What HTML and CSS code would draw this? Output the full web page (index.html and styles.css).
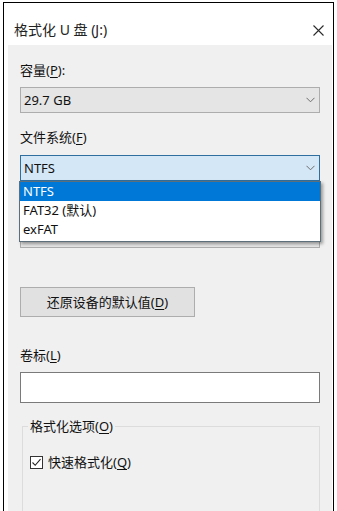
FILE: index.html
```html
<!DOCTYPE html>
<html lang="zh-CN">
<head>
<meta charset="utf-8">
<title>格式化 U 盘 (J:)</title>
<link rel="stylesheet" href="styles.css">
</head>
<body>
<div class="window">
  <div class="titlebar">
    <span class="title">格式化 U 盘 (J:)</span>
    <svg class="close" width="11" height="11" viewBox="0 0 11 11"><path d="M0.5 0.5 L10.5 10.5 M10.5 0.5 L0.5 10.5" stroke="#2b2b2b" stroke-width="1.1" fill="none"/></svg>
  </div>
  <div class="content">
    <div class="label first">容量(<u>P</u>):</div>
    <div class="select">
      <span>29.7 GB</span>
      <svg class="chev" width="9" height="6" viewBox="0 0 9 6"><polyline points="0.5,0.8 4.5,4.8 8.5,0.8" stroke="#6d6d6d" stroke-width="1" fill="none"/></svg>
    </div>
    <div class="label gap2">文件系统(<u>F</u>)</div>
    <div class="combo">
      <div class="select focused">
        <span>NTFS</span>
        <svg class="chev" width="9" height="6" viewBox="0 0 9 6"><polyline points="0.5,0.8 4.5,4.8 8.5,0.8" stroke="#6d6d6d" stroke-width="1" fill="none"/></svg>
      </div>
      <ul class="dropdown">
        <li class="sel">NTFS</li>
        <li>FAT32 (默认)</li>
        <li>exFAT</li>
      </ul>
    </div>
    <div class="label gap3 covered">分配单元大小(<u>A</u>)</div>
    <div class="select unit">
      <span class="covered">32 千字节 (默认)</span>
      <svg class="chev" width="9" height="6" viewBox="0 0 9 6"><polyline points="0.5,0.8 4.5,4.8 8.5,0.8" stroke="#6d6d6d" stroke-width="1" fill="none"/></svg>
    </div>
    <div class="button">还原设备的默认值(<u>D</u>)</div>
    <div class="label gap4">卷标(<u>L</u>)</div>
    <div class="input"></div>
    <fieldset class="group">
      <legend>格式化选项(<u>O</u>)</legend>
      <div class="check-row">
        <svg class="checkbox" width="13" height="13" viewBox="0 0 13 13"><rect x="0.5" y="0.5" width="12" height="12" fill="#fff" stroke="#333" stroke-width="1"/><polyline points="2.5,6.5 5.2,9.3 10.5,3.2" stroke="#222" stroke-width="1.1" fill="none"/></svg>
        <span>快速格式化(<u>Q</u>)</span>
      </div>
    </fieldset>
  </div>
</div>
</body>
</html>
```

FILE: styles.css
```css
html, body {
  margin: 0;
  padding: 0;
  background: #fff;
  overflow: hidden;
}
body {
  font-family: "Noto Sans", "Noto Sans CJK SC", sans-serif;
  font-size: 13px;
  color: #111;
}
u {
  text-decoration: underline;
  text-underline-offset: 2px;
  text-decoration-thickness: 1px;
}
.covered {
  visibility: hidden;
}
.window {
  margin: 2px 0 0 3px;
  width: 331px;
  height: 520px;
  border: 1px solid #000;
  border-bottom: 0;
  box-sizing: border-box;
  background: #fff;
  display: flex;
  flex-direction: column;
  overflow: hidden;
}
.titlebar {
  height: 42px;
  flex: none;
  box-sizing: border-box;
  padding: 12px 9px 0 10px;
  display: flex;
  align-items: center;
  justify-content: space-between;
}
.title {
  font-size: 14px;
  line-height: 20px;
  color: #222;
}
.close {
  display: block;
  margin-top: 1px;
}
.content {
  flex: 1;
  background: #f0f0f0;
  margin: 0 1px 0 4px;
  padding: 16px 12px 0 12px;
  display: flex;
  flex-direction: column;
  align-items: stretch;
}
.label {
  line-height: 18px;
  height: 18px;
  white-space: nowrap;
}
.gap2 { margin-top: 15px; }
.gap3 { margin-top: 14px; }
.gap4 { margin-top: 29px; }
.select {
  margin-top: 8px;
  height: 26px;
  box-sizing: border-box;
  border: 1px solid #adadad;
  background: #e5e5e5;
  display: flex;
  align-items: center;
  justify-content: space-between;
  padding: 0 4px 0 3px;
  line-height: 18px;
}
.select.unit { margin-top: 9px; }
.combo {
  position: relative;
  margin-top: 9px;
}
.combo .select {
  margin-top: 0;
}
.select.focused {
  border-color: #2f6f9f;
  background: #d3e7f7;
}
.chev { display: block; }
.dropdown {
  position: absolute;
  top: 26px;
  left: -1px;
  right: -1px;
  margin: 0;
  padding: 0 0 2px 0;
  list-style: none;
  background: #fff;
  border: 1px solid #5e6f7c;
  box-shadow: 2px 2px 3px rgba(0, 0, 0, 0.35);
  z-index: 2;
}
.dropdown li {
  height: 19px;
  line-height: 19px;
  padding-left: 3px;
  white-space: nowrap;
}
.dropdown li.sel {
  background: #0078d7;
  color: #fff;
}
.button {
  margin-top: 39px;
  width: 175px;
  height: 30px;
  box-sizing: border-box;
  border: 1px solid #adadad;
  background: #e1e1e1;
  display: flex;
  align-items: center;
  justify-content: center;
  line-height: 18px;
  white-space: nowrap;
}
.input {
  margin-top: 8px;
  height: 31px;
  box-sizing: border-box;
  border: 1px solid #7a7a7a;
  background: #fff;
}
.group {
  margin: 14px 0 0 2px;
  padding: 0 0 0 7px;
  border: 1px solid #dcdcdc;
  height: 120px;
  box-sizing: border-box;
  min-width: 0;
}
.group legend {
  margin-left: -2px;
  padding: 0 2px;
  line-height: 18px;
  white-space: nowrap;
}
.check-row {
  margin-top: 18px;
  display: flex;
  align-items: center;
  gap: 5px;
  line-height: 18px;
  white-space: nowrap;
}
.checkbox { display: block; }
```
